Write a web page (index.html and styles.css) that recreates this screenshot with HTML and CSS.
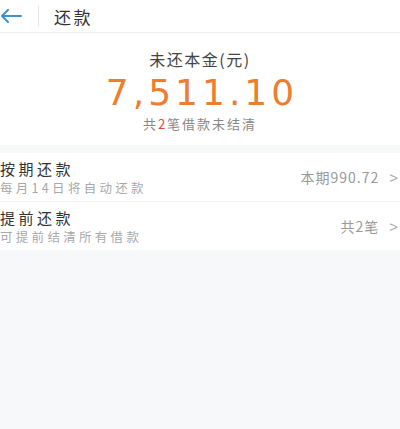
FILE: index.html
```html
<!DOCTYPE html>
<html lang="zh-CN">
<head>
    <meta charset="UTF-8">
    <meta name="viewport" content="width=device-width, initial-scale=1.0">
    <title>还款</title>
    <link rel="stylesheet" href="styles.css">
</head>
<body>
    <div class="header">
        <div class="back">
            <svg width="22" height="14" viewBox="0 0 22 14">
                <path d="M21 7H2M8 1L2 7l6 6" fill="none" stroke="#3f8fd2" stroke-width="2" stroke-linecap="round" stroke-linejoin="round"/>
            </svg>
        </div>
        <div class="divider"></div>
        <span class="title">还款</span>
    </div>
    <div class="summary">
        <div class="label">未还本金(元)</div>
        <div class="amount">7,511.10</div>
        <div class="count">共<span class="red">2</span>笔借款未结清</div>
    </div>
    <div class="list">
        <div class="row">
            <div class="rowText">
                <div class="rowTitle">按期还款</div>
                <div class="rowSub">每月14日将自动还款</div>
            </div>
            <div class="rowRight">本期990.72<span class="arrow">&gt;</span></div>
        </div>
        <div class="row">
            <div class="rowText">
                <div class="rowTitle">提前还款</div>
                <div class="rowSub">可提前结清所有借款</div>
            </div>
            <div class="rowRight">共2笔<span class="arrow">&gt;</span></div>
        </div>
    </div>
</body>
</html>
```
FILE: styles.css
```css
body{
    margin: 0;
    background: #f7f8fa;
    font-family: "Noto Sans CJK SC", "Noto Sans", sans-serif;
    color: #333;
}
.header{
    height: 32px;
    display: flex;
    align-items: center;
    background: #fff;
    border-bottom: 1px solid #eeeeee;
}
.back{
    width: 38px;
    display: flex;
    align-items: center;
}
.divider{
    width: 1px;
    height: 20px;
    background: #e6e6e6;
    margin-right: 15px;
}
.title{
    font-size: 17px;
    letter-spacing: 2.5px;
    color: #333;
}
.summary{
    background: #fff;
    height: 112px;
    display: flex;
    flex-direction: column;
    align-items: center;
}
.label{
    margin-top: 14px;
    font-size: 16px;
    line-height: 24px;
    letter-spacing: 1.5px;
    color: #444;
}
.amount{
    font-family: "DejaVu Sans", sans-serif;
    font-size: 36px;
    line-height: 42px;
    letter-spacing: 4px;
    color: #ee7d2f;
    margin-top: 1px;
    margin-left: 4px;
}
.count{
    font-size: 13px;
    line-height: 19px;
    letter-spacing: 2px;
    color: #888;
}
.red{
    color: #e6453d;
}
.list{
    background: #fff;
    margin-top: 8px;
}
.row{
    height: 48px;
    display: flex;
    align-items: center;
    justify-content: space-between;
    border-bottom: 1px solid #f1f1f1;
}
.row:last-child{
    border-bottom: none;
}
.rowText{
    padding-top: 1px;
}
.rowTitle{
    font-size: 15px;
    line-height: 20px;
    color: #333;
    letter-spacing: 3.5px;
}
.rowSub{
    font-size: 12.5px;
    line-height: 17px;
    color: #a8a8a8;
    letter-spacing: 3.3px;
}
.rowRight{
    font-size: 14px;
    letter-spacing: 1px;
    color: #999;
    display: flex;
    align-items: center;
}
.arrow{
    font-family: "Liberation Sans", sans-serif;
    font-size: 15px;
    margin-left: 10px;
    margin-right: 1px;
    color: #aaa;
}
```
